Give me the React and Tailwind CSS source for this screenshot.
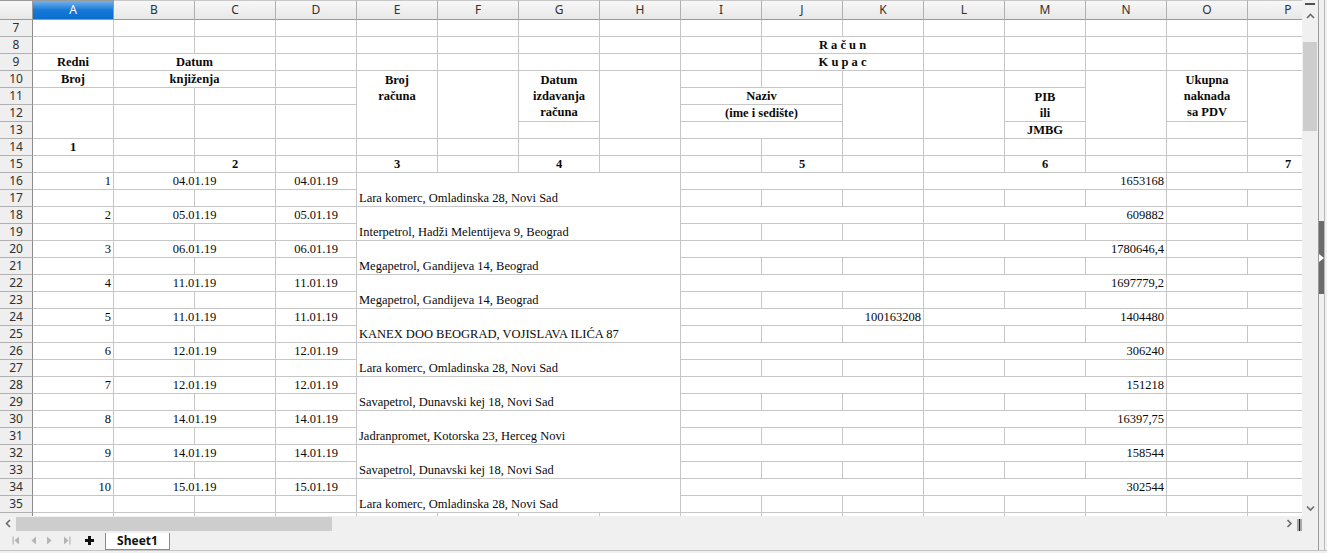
import React from 'react'

const letters = ['A', 'B', 'C', 'D', 'E', 'F', 'G', 'H', 'I', 'J', 'K', 'L', 'M', 'N', 'O', 'P']

// full class names for the spans, so the stylesheet picks them up
const spanCol = { 1: '', 2: 'col-span-2', 3: 'col-span-3', 4: 'col-span-4' }
const spanRow = { 1: '', 2: 'row-span-2', 3: 'row-span-3', 4: 'row-span-4' }
const alignX = {
  l: 'justify-start text-left pl-[2px]',
  c: 'justify-center text-center',
  r: 'justify-end text-right pr-[2px]'
}
const alignY = { t: 'items-start pt-px', c: 'items-center', b: 'items-end' }

const empty = (n = 1) => Array.from({ length: n }, () => ({}))
const head = (t, o = {}) => ({ t, x: 'c', b: true, ...o })

const headerRows = [
  { n: 7, cells: empty(16) },
  { n: 8, cells: [...empty(9), head('R a č u n', { cs: 2 }), ...empty(5)] },
  { n: 9, cells: [head('Redni'), head('Datum', { cs: 2 }), ...empty(6), head('K u p a c', { cs: 2 }), ...empty(5)] },
  {
    n: 10,
    cells: [
      head('Broj'),
      head('knjiženja', { cs: 2 }),
      {},
      head('Broj\nračuna', { rs: 4, y: 't' }),
      { rs: 4 },
      head('Datum\nizdavanja\nračuna', { rs: 3, y: 'c' }),
      { rs: 4 },
      ...empty(5),
      { rs: 4 },
      head('Ukupna\nnaknada\nsa PDV', { rs: 3, y: 'c' }),
      { rs: 4 }
    ]
  },
  { n: 11, cells: [...empty(4), head('Naziv', { cs: 2 }), { rs: 3 }, { rs: 3 }, head('PIB\nili', { rs: 2, y: 'c' })] },
  { n: 12, cells: [{ rs: 2 }, { rs: 2 }, { rs: 2 }, { rs: 2 }, head('(ime i sedište)', { cs: 2 })] },
  { n: 13, cells: [{}, { cs: 2 }, head('JMBG'), {}] },
  { n: 14, cells: [head('1'), ...empty(15)] },
  {
    n: 15,
    cells: [
      {}, {}, head('2'), {}, head('3'), {}, head('4'), {}, {},
      head('5'), {}, {}, head('6'), {}, {}, head('7')
    ]
  }
]

const invoices = [
  { no: 1, date: '04.01.19', name: 'Lara komerc, Omladinska 28, Novi Sad', sum: '1653168' },
  { no: 2, date: '05.01.19', name: 'Interpetrol, Hadži Melentijeva 9, Beograd', sum: '609882' },
  { no: 3, date: '06.01.19', name: 'Megapetrol, Gandijeva 14, Beograd', sum: '1780646,4' },
  { no: 4, date: '11.01.19', name: 'Megapetrol, Gandijeva 14, Beograd', sum: '1697779,2' },
  { no: 5, date: '11.01.19', name: 'KANEX DOO BEOGRAD, VOJISLAVA ILIĆA 87', pib: '100163208', sum: '1404480' },
  { no: 6, date: '12.01.19', name: 'Lara komerc, Omladinska 28, Novi Sad', sum: '306240' },
  { no: 7, date: '12.01.19', name: 'Savapetrol, Dunavski kej 18, Novi Sad', sum: '151218' },
  { no: 8, date: '14.01.19', name: 'Jadranpromet, Kotorska 23, Herceg Novi', sum: '16397,75' },
  { no: 9, date: '14.01.19', name: 'Savapetrol, Dunavski kej 18, Novi Sad', sum: '158544' },
  { no: 10, date: '15.01.19', name: 'Lara komerc, Omladinska 28, Novi Sad', sum: '302544' }
]

// every invoice takes two sheet rows
const dataRows = invoices.flatMap((inv, i) => {
  const n = 16 + i * 2
  return [
    {
      n,
      cells: [
        { t: String(inv.no), x: 'r' },
        { t: inv.date, x: 'c', cs: 2 },
        { t: inv.date, x: 'c' },
        { t: inv.name, x: 'l', cs: 4, rs: 2 },
        { t: inv.pib || '', x: 'r', cs: 3 },
        { t: inv.sum, x: 'r', cs: 3 },
        { cs: 2 }
      ]
    },
    { n: n + 1, cells: empty(12) }
  ]
})

// row 36 only peeks out under the last row, its number stays hidden
const rows = [...headerRows, ...dataRows, { n: 36, hideLabel: true, cells: empty(16) }]

function Cell({ t = '', x = 'l', y = 'b', b, cs = 1, rs = 1 }) {
  return (
    <div
      className={`flex min-w-0 border-r border-b border-[#c6c6c6] bg-white ${spanCol[cs]} ${spanRow[rs]} ${alignY[y]} ${alignX[x]}`}
    >
      {t && (
        <span className={`whitespace-pre leading-[16px] ${b ? 'font-bold' : ''}`}>
          {t}
        </span>
      )}
    </div>
  )
}

function Chevron({ dir }) {
  const pts = {
    up: '1,5 4.5,1.5 8,5',
    down: '1,1.5 4.5,5 8,1.5',
    left: '5,1 1.5,4.5 5,8',
    right: '1.5,1 5,4.5 1.5,8'
  }
  const wide = dir === 'up' || dir === 'down'
  return (
    <svg width={wide ? 9 : 7} height={wide ? 7 : 9} viewBox={wide ? '0 0 9 7' : '0 0 7 9'}>
      <polyline points={pts[dir]} fill="none" stroke="#6a6a6a" strokeWidth="1.6" />
    </svg>
  )
}

function NavIcon({ kind }) {
  return (
    <svg width="8" height="9" viewBox="0 0 8 9">
      {kind === 'first' && <rect x="0.5" y="0.5" width="1.2" height="8" fill="#b4b4b4" />}
      {(kind === 'first' || kind === 'prev') && <polygon points="7,0.5 2.5,4.5 7,8.5" fill="#b4b4b4" />}
      {(kind === 'next' || kind === 'last') && <polygon points="1,0.5 5.5,4.5 1,8.5" fill="#b4b4b4" />}
      {kind === 'last' && <rect x="6.3" y="0.5" width="1.2" height="8" fill="#b4b4b4" />}
    </svg>
  )
}

function SheetGrid() {
  return (
    <div className="w-[1302px] h-[516px] overflow-hidden bg-white">
      <div className="grid grid-cols-[33px_repeat(16,81px)] grid-rows-[20px] auto-rows-[17px] text-[12.5px] text-[#0a0a0a] font-['Liberation_Serif','Times_New_Roman',serif]">
        {/* column headers */}
        <div className="border-t border-r border-b border-[#9a9a9a] bg-linear-to-b from-[#f7f7f7] to-[#e8e8e8]" />
        {letters.map(l =>
          l === 'A' ? (
            <div
              key={l}
              className="flex items-center justify-center border-t border-r border-b border-[#9a9a9a] bg-linear-to-b from-[#6cb2ee] via-[#1579d6] to-[#0a6ecf] text-white text-[12px] font-['Noto_Sans','DejaVu_Sans',sans-serif]"
            >
              {l}
            </div>
          ) : (
            <div
              key={l}
              className="flex items-center justify-center border-t border-r border-b border-t-[#c8c8c8] border-r-[#b0b0b0] border-b-[#9a9a9a] bg-linear-to-b from-[#f7f7f7] to-[#e8e8e8] text-[#303030] text-[12px] font-['Noto_Sans','DejaVu_Sans',sans-serif]"
            >
              {l}
            </div>
          )
        )}

        {rows.map(row => (
          <React.Fragment key={row.n}>
            <div className="col-start-1 flex items-center justify-center border-r border-b border-r-[#8c8c8c] border-b-[#b0b0b0] bg-[#efefef] text-[#303030] text-[12px] leading-none font-['Noto_Sans','DejaVu_Sans',sans-serif]">
              {row.hideLabel ? '' : row.n}
            </div>
            {row.cells.map((cell, i) => (
              <Cell key={i} {...cell} />
            ))}
          </React.Fragment>
        ))}
      </div>
    </div>
  )
}

function VerticalScroll() {
  return (
    <div className="w-4 h-[516px] flex flex-col items-center bg-[#f0f0f0]">
      <div className="h-2 w-full flex items-center justify-center">
        <div className="w-[10px] h-[2px] bg-[#505050]" />
      </div>
      <div className="h-4 flex items-center justify-center">
        <Chevron dir="up" />
      </div>
      <div className="mt-[18px] w-[14px] h-[89px] bg-[#cdcdcd]" />
      <div className="flex-1" />
      <div className="h-4 flex items-center justify-center">
        <Chevron dir="down" />
      </div>
    </div>
  )
}

function HorizontalScroll() {
  return (
    <div className="h-[15px] flex items-center bg-[#f0f0f0]">
      <div className="w-4 flex items-center justify-center">
        <Chevron dir="left" />
      </div>
      <div className="w-[316px] h-[14px] mt-px bg-[#cdcdcd]" />
      <div className="flex-1" />
      <div className="w-3 flex items-center justify-center">
        <Chevron dir="right" />
      </div>
      <div className="ml-[2px] w-[5px] h-[12px] mt-[3px] bg-[#a8a8a8] flex justify-center">
        <div className="w-px h-full bg-[#222]" />
      </div>
      <div className="w-4" />
    </div>
  )
}

function SheetTabs() {
  return (
    <div className="h-[19px] flex items-start bg-[#f0f0f0]">
      <div className="flex items-center gap-[9px] pl-[12px] h-full">
        <NavIcon kind="first" />
        <NavIcon kind="prev" />
        <NavIcon kind="next" />
        <NavIcon kind="last" />
      </div>
      <div className="ml-[14px] h-full flex items-center">
        <svg width="9" height="9" viewBox="0 0 9 9">
          <rect x="3" y="0" width="3" height="9" fill="#111" />
          <rect x="0" y="3" width="9" height="3" fill="#111" />
        </svg>
      </div>
      <div className="ml-[11px] mt-[2px] w-[65px] h-[17px] flex items-center justify-center bg-white border-l border-r border-b border-[#8a8a8a] text-[12px] font-bold text-[#111] font-['Noto_Sans','DejaVu_Sans',sans-serif]">
        Sheet1
      </div>
    </div>
  )
}

export default function App() {
  return (
    <div className="w-[1327px] h-[553px] overflow-hidden flex flex-col bg-[#f0f0f0]">
      <div className="flex h-[550px]">
        <div className="w-[1318px] flex flex-col">
          <div className="flex">
            <SheetGrid />
            <VerticalScroll />
          </div>
          <HorizontalScroll />
          <SheetTabs />
        </div>

        {/* collapsed sidebar strip */}
        <div className="w-[9px] h-full flex flex-col bg-[#f0f0f0] border-l border-r border-l-[#9a9a9a] border-r-[#b8b8b8] mr-[2px]">
          <div className="h-[221px]" />
          <div className="h-[73px] bg-[#6b6b6b] flex items-center justify-center">
            <svg width="5" height="8" viewBox="0 0 5 8">
              <polygon points="0,0 5,4 0,8" fill="#ffffff" />
            </svg>
          </div>
        </div>
      </div>
      <div className="h-[3px] border-t border-[#c4c4c4]" />
    </div>
  )
}
